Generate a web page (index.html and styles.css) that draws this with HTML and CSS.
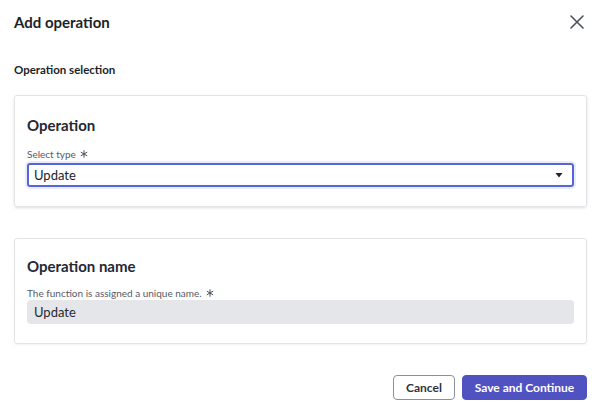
FILE: index.html
```html
<!DOCTYPE html>
<html lang="en">
<head>
<meta charset="UTF-8" />
<meta name="viewport" content="width=device-width, initial-scale=1" />
<title>Add operation</title>
<link rel="stylesheet" href="styles.css">
</head>
<body>

<div class="modal">
  <!-- Header -->
  <div class="modal-header">
    <h1 class="modal-title">Add operation</h1>
    <button class="close-btn" aria-label="Close">
      <svg width="14" height="14" viewBox="0 0 14 14">
        <path d="M1 1 L13 13 M13 1 L1 13" stroke="#4b505c" stroke-width="1.6" stroke-linecap="round" fill="none" />
      </svg>
    </button>
  </div>

  <h2 class="section-label">Operation selection</h2>

  <!-- Operation type -->
  <div class="card card-active">
    <h3 class="card-title">Operation</h3>
    <div class="field field-select">
      <label class="field-label">Select type
        <svg class="required" width="8" height="8" viewBox="0 0 8 8">
          <path d="M4 0.3 V7.7 M0.8 2.15 L7.2 5.85 M0.8 5.85 L7.2 2.15" stroke="#4b505c" stroke-width="1" fill="none" />
        </svg>
      </label>
      <div class="select">
        <span>Update</span>
        <svg width="8" height="5" viewBox="0 0 8 5"><path d="M0.5 0 H7.5 L4 4.5 Z" fill="#1f2430" /></svg>
      </div>
    </div>
  </div>

  <!-- Operation name -->
  <div class="card">
    <h3 class="card-title">Operation name</h3>
    <div class="field">
      <label class="field-label">The function is assigned a unique name.
        <svg class="required" width="8" height="8" viewBox="0 0 8 8">
          <path d="M4 0.3 V7.7 M0.8 2.15 L7.2 5.85 M0.8 5.85 L7.2 2.15" stroke="#4b505c" stroke-width="1" fill="none" />
        </svg>
      </label>
      <div class="input-readonly">Update</div>
    </div>
  </div>

  <!-- Footer -->
  <div class="modal-footer">
    <button class="btn btn-secondary">Cancel</button>
    <button class="btn btn-primary">Save and Continue</button>
  </div>
</div>

</body>
</html>
```

FILE: styles.css
```css
body {
  margin: 0;
  background: #fff;
  font-family: Lato, "Liberation Sans", sans-serif;
  color: #1f2430;
}

.modal {
  padding: 12px 13px 0 14px;
}

.modal-header {
  display: flex;
  justify-content: space-between;
  align-items: center;
  height: 20px;
}

.modal-title {
  margin: 0;
  font-size: 15px;
  line-height: 20px;
  font-weight: 700;
  color: #1c1f27;
}

.close-btn {
  background: none;
  border: none;
  padding: 0;
  margin-right: 3px;
  width: 14px;
  height: 14px;
  display: flex;
  cursor: pointer;
}

.section-label {
  margin: 30px 0 0;
  font-size: 11.5px;
  line-height: 16px;
  font-weight: 700;
  color: #1c1f27;
}

/* Cards */
.card {
  margin-top: 31px;
  border: 1px solid #e3e4e8;
  border-radius: 3px;
  padding: 17px 12px 19px;
  box-shadow: 0 1px 2px rgba(0, 0, 0, 0.05);
}

.card-active {
  margin-top: 17px;
  padding-top: 19px;
  box-shadow: 0 1px 3px rgba(0, 0, 0, 0.13);
}

.card-title {
  margin: 0;
  font-size: 15px;
  line-height: 20px;
  font-weight: 700;
  color: #232834;
}

.field {
  margin-top: 11px;
}

.field-select {
  margin-top: 13px;
}

.field-label {
  display: flex;
  align-items: center;
  gap: 4px;
  font-size: 10px;
  line-height: 12px;
  color: #555a66;
  margin-bottom: 1px;
}

.field-select .field-label {
  margin-bottom: 3px;
}

.select {
  height: 24px;
  box-sizing: border-box;
  border: 2px solid #5566dd;
  border-radius: 3px;
  box-shadow: 0 0 0 2px rgba(85, 102, 221, 0.12);
  display: flex;
  align-items: center;
  justify-content: space-between;
  padding: 0 9px 0 5px;
  font-size: 13px;
  color: #1a1e28;
}

.input-readonly {
  height: 24px;
  box-sizing: border-box;
  background: #e5e6ea;
  border-radius: 4px;
  display: flex;
  align-items: center;
  padding: 0 7px;
  font-size: 13px;
  color: #262a34;
}

/* Footer */
.modal-footer {
  display: flex;
  justify-content: flex-end;
  gap: 7px;
  margin-top: 31px;
}

.btn {
  height: 25px;
  border-radius: 4px;
  font-family: Lato, "Liberation Sans", sans-serif;
  font-size: 12px;
  font-weight: 700;
  cursor: pointer;
}

.btn-secondary {
  width: 62px;
  background: #fff;
  border: 1px solid #8c909a;
  color: #2f333d;
}

.btn-primary {
  width: 125px;
  background: #5152c2;
  border: 1px solid #5152c2;
  color: #fff;
}
```
